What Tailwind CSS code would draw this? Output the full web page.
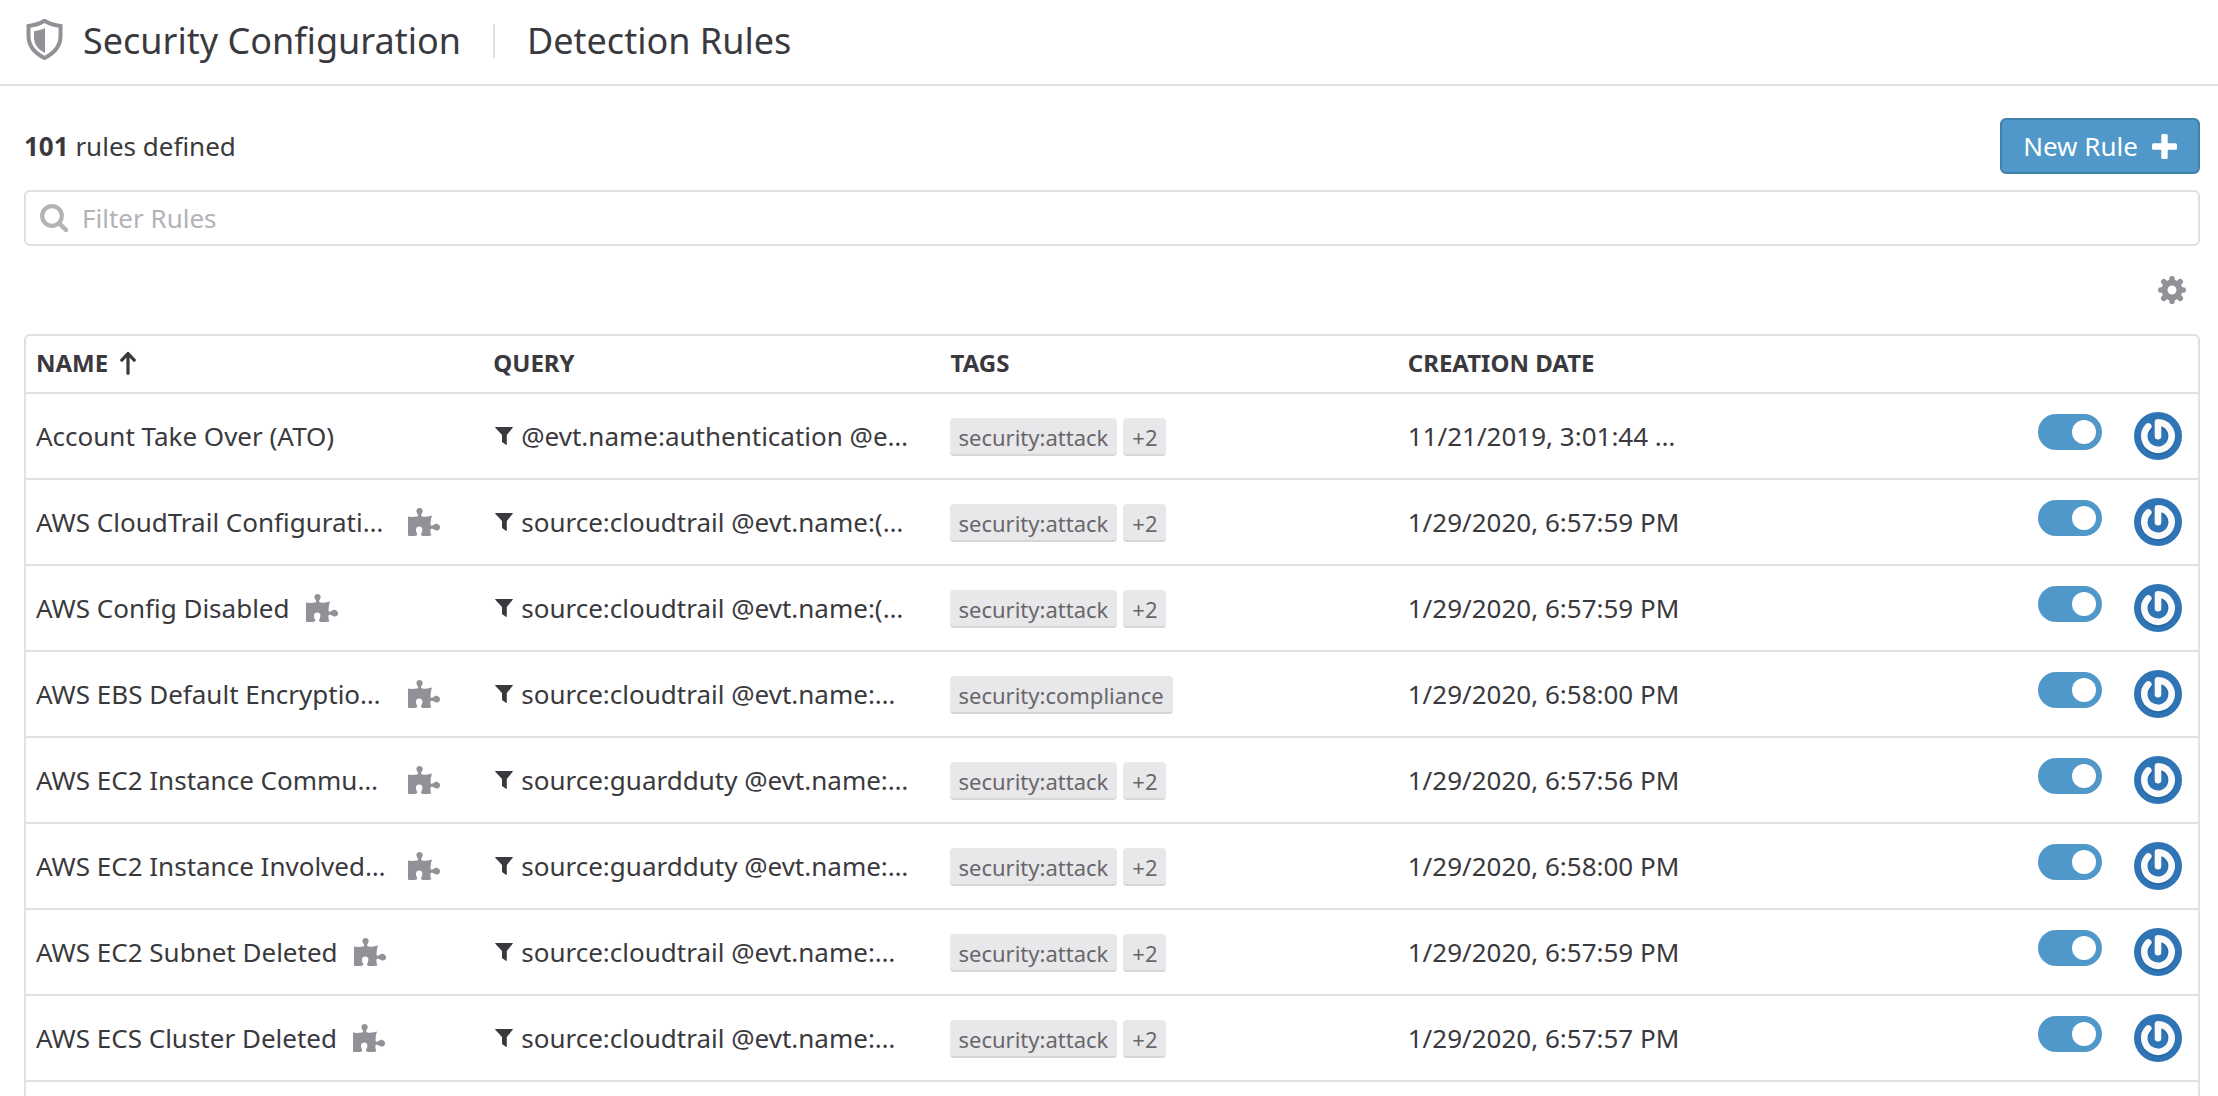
<!DOCTYPE html>
<html lang="en">
<head>
<meta charset="utf-8">
<meta name="viewport" content="width=device-width, initial-scale=1">
<title>Security Configuration - Detection Rules</title>
<script src="https://cdn.jsdelivr.net/npm/@tailwindcss/browser@4"></script>
</head>
<body class="flex h-screen flex-col overflow-hidden bg-white font-['Noto_Sans',sans-serif] text-[26px] leading-9 text-[#3a393d]">

<svg class="hidden" aria-hidden="true">
  <symbol id="puzzle" viewBox="0 0 32 28">
    <path d="M0 8.6C2.6 9.2 5.6 9.2 8.6 8.6C10.4 8.2 10.3 7.2 9.4 5.8C8.6 4.400 8.200 3.200 8.500 2.200C9 .7 10.100 0 11.500 0C13 0 14.100.7 14.600 2.200C14.900 3.200 14.500 4.400 13.700 5.800C12.800 7.200 12.800 8.200 14.600 8.500C17.800 9 21 8.600 24 7.600C23.100 10.400 22.500 13.600 22.600 16.300C22.700 18 23.700 18.100 25 17.300C26.500 16.300 27.800 15.600 29.200 15.900C31 16.300 32 17.500 32 19.200C32 20.900 31 22.200 29.200 22.500C27.800 22.700 26.500 22.100 25 21.100C23.700 20.300 22.500 20.600 22.400 22.200C22.300 24.200 22.700 26.100 23.300 27.600C20 28.200 16.600 28.200 14.200 27.700C12.900 27.400 12.800 26.400 13.400 25.200C14 24 14.500 22.800 14.400 21.500C14.300 19.700 13.100 18.600 11.200 18.600C9.300 18.600 8.100 19.700 8 21.500C7.900 22.800 8.300 24 8.900 25.200C9.500 26.500 9.200 27.500 7.900 27.700C5.400 28.100 2.600 28.100 0 27.800Z" fill="currentColor"/>
  </symbol>
  <symbol id="funnel" viewBox="0 0 18 18">
    <path d="M.6 0H17.400Q18.200 0 17.700.8L11.800 8V17.200Q11.800 18.300 10.900 17.700L7 15V8L.300.800Q-.2 0 .6 0Z" fill="currentColor"/>
  </symbol>
  <symbol id="avatar" viewBox="0 0 48 48">
    <circle cx="24" cy="24" r="24" fill="#2f74b5"/>
    <path d="M24 11.500A13.500 13.500 0 1 1 14.800 14.600" transform="translate(.5 .8)" fill="none" stroke="#1d5a97" stroke-opacity=".5" stroke-width="7.500" stroke-linecap="round"/>
    <path d="M24 24.300V10.400A13.700 13.700 0 1 1 14.300 14.400" fill="none" stroke="#fafafa" stroke-width="6.600" stroke-linecap="round" stroke-linejoin="round"/>
  </symbol>
</svg>

<header class="flex h-[86px] shrink-0 items-center border-b-2 border-[#dfdfe5] px-6 pb-0.5 text-4xl leading-12">
  <svg class="h-11 w-11 shrink-0" viewBox="0 0 44 44" aria-hidden="true">
    <path d="M21 4.300Q28.500 8.800 37 9.500V19.500C37 30.500 30 37 21 41.500C12 37 5 30.500 5 19.500V9.500Q13.500 8.800 21 4.300Z" fill="none" stroke="#939197" stroke-width="4" transform="translate(-.5 -2.500)"/>
    <path d="M21 9.300V34C14 30.500 10 25.500 10 18.500V12.200Q16 11.500 21 9.300Z" fill="#939197"/>
  </svg>
  <h1 class="ml-[15px]">Security Configuration</h1>
  <span class="mx-8 h-[34px] w-0.5 bg-[#dfdfe5]"></span>
  <h2>Detection Rules</h2>
</header>

<main class="flex min-h-0 flex-1 flex-col pt-8 pr-[18px] pl-6">
  <div class="flex items-center justify-between">
    <p><b>101</b> rules defined</p>
    <button type="button" class="flex h-14 w-[200px] items-center justify-center gap-3.5 rounded-md border-2 border-[#4180a8] bg-[#5098c9] text-white">
      New Rule
      <svg class="h-[25px] w-[25px]" viewBox="0 0 25 25" fill="currentColor" aria-hidden="true"><rect x="9.300" width="6.400" height="25" rx="1.500"/><rect y="9.300" width="25" height="6.400" rx="1.500"/></svg>
    </button>
  </div>

  <label class="mt-4 flex h-14 shrink-0 items-center rounded-md border-2 border-[#dfdfe5] px-3.5">
    <svg class="h-7 w-7 shrink-0" viewBox="0 0 28 28" fill="none" stroke="#b3b2b7" aria-hidden="true"><circle cx="12" cy="12" r="9.800" stroke-width="4.200"/><path d="M19.500 19.500L26 26" stroke-width="4.500" stroke-linecap="round"/></svg>
    <input type="text" aria-label="Filter Rules" placeholder="Filter Rules" class="ml-3.5 min-w-0 flex-1 outline-none placeholder:text-[#b3b2b7]">
  </label>

  <div class="flex h-[88px] shrink-0 items-center justify-end pr-3.5">
    <button type="button" aria-label="Table settings" class="text-[#939197]">
      <svg class="h-7 w-7" viewBox="-14 -14 28 28" aria-hidden="true">
        <circle r="7.500" fill="none" stroke="currentColor" stroke-width="6"/>
        <g stroke="currentColor" stroke-width="5.600" stroke-linecap="round">
          <path d="M0 -8V-11.200M0 8V11.200M8 0H11.200M-8 0H-11.200"/>
          <path d="M6 -6L8.200 -8.200M6 6L8.200 8.200M-6 6L-8.200 8.200M-6 -6L-8.200 -8.200"/>
        </g>
      </svg>
    </button>
  </div>

  <div class="flex-1 overflow-hidden rounded-t-md border-2 border-b-0 border-[#dfdfe5]">
    <table class="w-full table-fixed border-separate border-spacing-0 text-left">
      <thead class="text-2xl">
        <tr class="h-[58px]">
          <th scope="col" class="w-4/19 border-b-2 border-[#dfdfe5] pb-0.5 pl-2.5">
            <span class="flex items-center gap-3">NAME
              <svg class="h-6 w-4" viewBox="0 0 16 24" fill="none" stroke="currentColor" stroke-width="3.200" stroke-linecap="round" stroke-linejoin="round" aria-label="sorted ascending"><path d="M8 22.300V3M1.800 9.200L8 2.500L14.200 9.200"/></svg>
            </span>
          </th>
          <th scope="col" class="w-4/19 border-b-2 border-[#dfdfe5] pb-0.5 pl-2.5">QUERY</th>
          <th scope="col" class="w-4/19 border-b-2 border-[#dfdfe5] pb-0.5 pl-2.5">TAGS</th>
          <th scope="col" class="border-b-2 border-[#dfdfe5] pb-0.5 pl-2.5">CREATION DATE</th>
          <th scope="col" aria-label="Status" class="w-[170px] border-b-2 border-[#dfdfe5]"></th>
        </tr>
      </thead>
      <tbody id="rules"></tbody>
    </table>
  </div>
</main>

<script>
  const trail = 'source:cloudtrail @evt.name:';
  const guard = 'source:guardduty @evt.name:';
  const attack = ['security:attack', '+2'];
  const rules = [
    ['Account Take Over (ATO)', false, '@evt.name:authentication @e…', attack, '11/21/2019, 3:01:44 …'],
    ['AWS CloudTrail Configurati…', true, trail + '(…', attack, '1/29/2020, 6:57:59 PM'],
    ['AWS Config Disabled', true, trail + '(…', attack, '1/29/2020, 6:57:59 PM'],
    ['AWS EBS Default Encryptio…', true, trail + '…', ['security:compliance'], '1/29/2020, 6:58:00 PM'],
    ['AWS EC2 Instance Commu…', true, guard + '…', attack, '1/29/2020, 6:57:56 PM'],
    ['AWS EC2 Instance Involved…', true, guard + '…', attack, '1/29/2020, 6:58:00 PM'],
    ['AWS EC2 Subnet Deleted', true, trail + '…', attack, '1/29/2020, 6:57:59 PM'],
    ['AWS ECS Cluster Deleted', true, trail + '…', attack, '1/29/2020, 6:57:57 PM'],
  ];
  document.getElementById('rules').innerHTML = rules.map(([name, integration, query, tags, date]) => `
    <tr class="h-[86px]">
      <td class="border-b-2 border-[#dfdfe5] pr-[43px] pl-2.5">
        <div class="flex items-center gap-4 whitespace-nowrap">
          <span class="${name.endsWith('…') ? 'flex-1' : 'flex-none'}">${name}</span>
          ${integration ? '<svg class="h-7 w-8 shrink-0 text-[#939197]" aria-hidden="true"><use href="#puzzle"/></svg>' : ''}
        </div>
      </td>
      <td class="border-b-2 border-[#dfdfe5] pl-3">
        <div class="flex items-center gap-2 whitespace-nowrap">
          <svg class="h-[18px] w-[18px] shrink-0" aria-hidden="true"><use href="#funnel"/></svg>
          <span>${query}</span>
        </div>
      </td>
      <td class="border-b-2 border-[#dfdfe5] pt-0.5 pl-[9px]">
        <div class="flex gap-1.5">
          ${tags.map(tag => `<span class="h-[38px] rounded border-b-2 border-[#d6d6d8] bg-[#e8e8ea] px-[9px] pt-px text-[22px] text-[#68676b]">${tag}</span>`).join('')}
        </div>
      </td>
      <td class="border-b-2 border-[#dfdfe5] pl-2.5 whitespace-nowrap">${date}</td>
      <td class="border-b-2 border-[#dfdfe5] pr-4">
        <div class="flex items-start justify-end gap-8">
          <input type="checkbox" role="switch" checked aria-label="Enable ${name}" class="mt-0.5 h-9 w-16 appearance-none rounded-full bg-[#b3b2b7] p-1.5 before:block before:h-6 before:w-6 before:rounded-full before:bg-white before:content-[''] checked:bg-[#5098c9] checked:before:ml-7">
          <svg class="h-12 w-12 shrink-0" role="img" aria-label="Rule author"><use href="#avatar"/></svg>
        </div>
      </td>
    </tr>`).join('');
</script>
</body>
</html>
